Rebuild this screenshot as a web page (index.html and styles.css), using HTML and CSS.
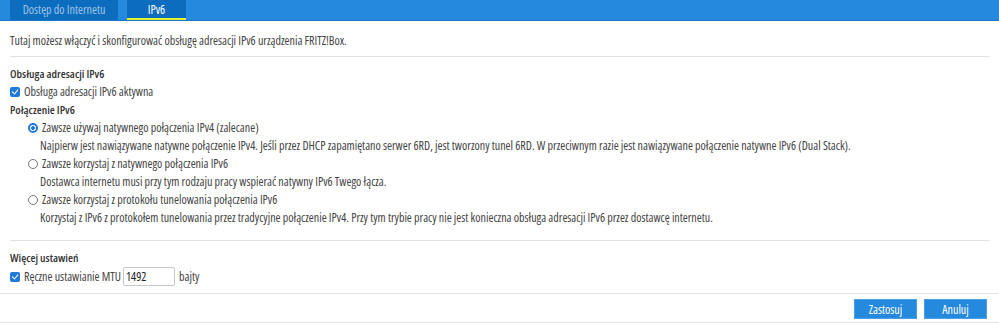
FILE: index.html
```html
<!DOCTYPE html>
<html>
<head>
    <meta charset="utf-8">
    <title>IPv6</title>
    <link rel="stylesheet" href="styles.css">
</head>
<body>
    <div class="tabbar">
        <a class="tab">Dostęp do Internetu</a>
        <a class="tab active">IPv6</a>
    </div>

    <div class="content">
        <p class="intro">Tutaj możesz włączyć i skonfigurować obsługę adresacji IPv6 urządzenia FRITZ!Box.</p>
        <hr class="sep">

        <h4>Obsługa adresacji IPv6</h4>
        <label class="check"><input type="checkbox" checked> Obsługa adresacji IPv6 aktywna</label>

        <h4 class="tight">Połączenie IPv6</h4>
        <div class="options">
            <label class="radio"><input type="radio" name="mode" checked> Zawsze używaj natywnego połączenia IPv4 (zalecane)</label>
            <div class="desc">Najpierw jest nawiązywane natywne połączenie IPv4. Jeśli przez DHCP zapamiętano serwer 6RD, jest tworzony tunel 6RD. W przeciwnym razie jest nawiązywane połączenie natywne IPv6 (Dual Stack).</div>
            <label class="radio"><input type="radio" name="mode"> Zawsze korzystaj z natywnego połączenia IPv6</label>
            <div class="desc">Dostawca internetu musi przy tym rodzaju pracy wspierać natywny IPv6 Twego łącza.</div>
            <label class="radio"><input type="radio" name="mode"> Zawsze korzystaj z protokołu tunelowania połączenia IPv6</label>
            <div class="desc">Korzystaj z IPv6 z protokołem tunelowania przez tradycyjne połączenie IPv4. Przy tym trybie pracy nie jest konieczna obsługa adresacji IPv6 przez dostawcę internetu.</div>
        </div>
        <hr class="sep sep-low">

        <h4>Więcej ustawień</h4>
        <label class="check mtu"><input type="checkbox" checked> Ręczne ustawianie MTU <input type="text" class="mtu-input" value="1492"> bajty</label>
    </div>

    <div class="footer">
        <button type="button" class="btn">Zastosuj</button>
        <button type="button" class="btn">Anuluj</button>
    </div>
</body>
</html>
```

FILE: styles.css
```css
body {
    margin: 0;
    font-family: "Open Sans", sans-serif;
    font-stretch: 75%;
    font-size: 12px;
    color: #444;
    background: #fff;
}
.tabbar {
    display: flex;
    gap: 9px;
    height: 20px;
    padding-left: 10px;
    background: #2589dd;
    border-bottom: 1px solid #1c74c4;
}
.tab {
    display: flex;
    align-items: center;
    justify-content: center;
    width: 108px;
    height: 18px;
    background: #0c6dbf;
    color: #9fc3e6;
    font-size: 12px;
    border-bottom: 2px solid transparent;
}
.tab.active {
    width: 59px;
    color: #fff;
    border-bottom-color: #e4ef2e;
}
.content {
    padding: 0 10px;
}
.intro {
    margin: 11px 0 0;
    line-height: 18px;
}
.sep {
    margin: 6px 0 0;
    border: none;
    border-top: 1px solid #e2e2e2;
}
.sep-low {
    margin-top: 13px;
}
h4 {
    margin: 8px 0 0;
    font-size: 11.5px;
    line-height: 18px;
    font-weight: 600;
    color: #333;
}
h4.tight {
    margin-top: 0;
}
.check, .radio {
    display: flex;
    align-items: center;
    line-height: 18px;
}
.options {
    padding-left: 18px;
}
.desc {
    padding-left: 12px;
    line-height: 18px;
}
input[type="checkbox"] {
    appearance: none;
    width: 10px;
    height: 10px;
    margin: 0 4px 0 0;
    border-radius: 2px;
    background: #1f7ad8;
    position: relative;
}
input[type="checkbox"]:checked::after {
    content: "";
    position: absolute;
    left: 3px;
    top: 1px;
    width: 3px;
    height: 5px;
    border: solid #fff;
    border-width: 0 1.5px 1.5px 0;
    transform: rotate(40deg);
}
input[type="radio"] {
    appearance: none;
    width: 10px;
    height: 10px;
    margin: 0 4px 0 0;
    border: 1px solid #777;
    border-radius: 50%;
    box-sizing: border-box;
}
input[type="radio"]:checked {
    border: 2px solid #1f7ad8;
    background: radial-gradient(circle, #1f7ad8 0 1.6px, #fff 2px);
}
.mtu {
    height: 19px;
}
.mtu-input {
    width: 52px;
    height: 19px;
    margin: 0 4px 0 2px;
    padding: 0 2px;
    border: 1px solid #c8c8c8;
    border-radius: 2px;
    box-sizing: border-box;
    font-family: inherit;
    font-stretch: 75%;
    font-size: 12px;
    color: #222;
}
.footer {
    display: flex;
    justify-content: flex-end;
    gap: 7px;
    margin-top: 7px;
    padding: 5px 12px 3px;
    border-top: 1px solid #e2e2e2;
    border-bottom: 1px solid #e2e2e2;
}
.btn {
    width: 63px;
    height: 20px;
    padding: 0;
    background: #2589dd;
    color: #fff;
    border: 1px solid #4a9fe6;
    font-family: inherit;
    font-stretch: 75%;
    font-size: 12px;
}
```
